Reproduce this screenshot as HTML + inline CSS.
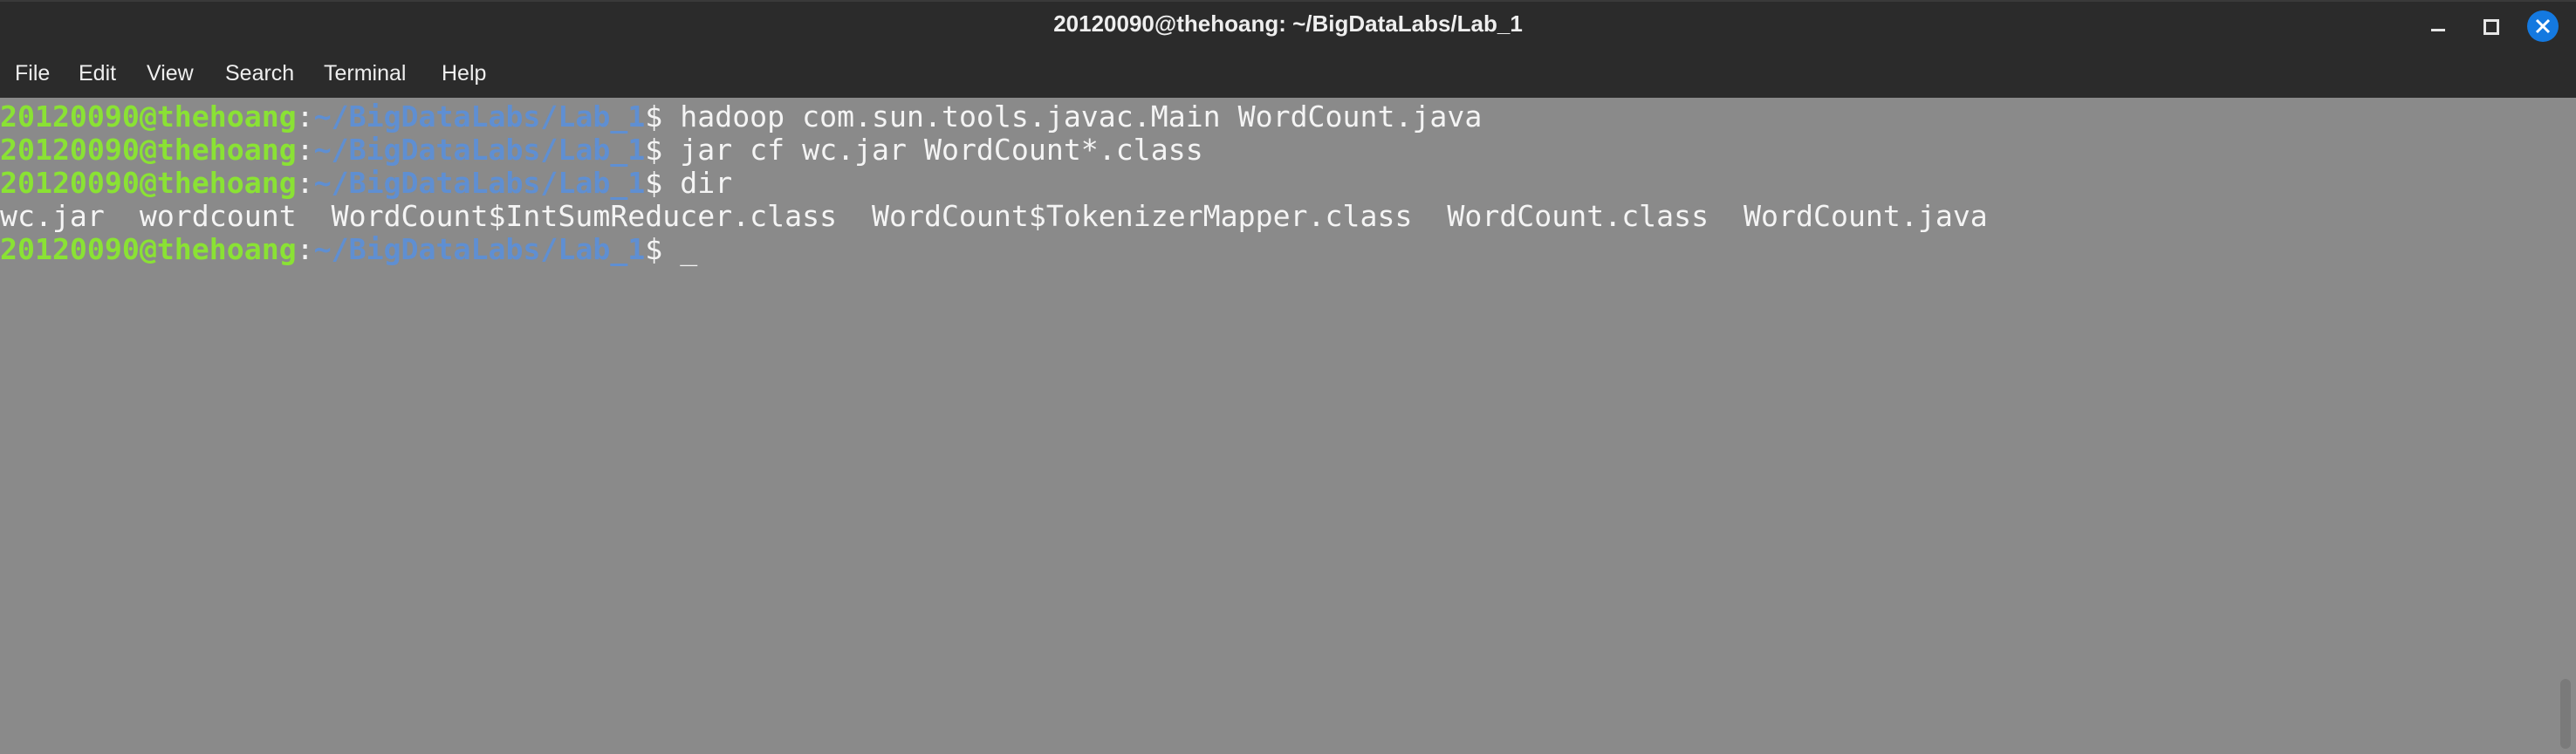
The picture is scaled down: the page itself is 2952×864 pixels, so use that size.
<!DOCTYPE html>
<html><head><style>
body{margin:0;width:2952px;height:864px;background:#8a8a8a;overflow:hidden;position:relative;font-family:"Liberation Sans",sans-serif}
#hd{position:absolute;left:0;top:0;width:2952px;height:112px;background:#2b2b2b;border-top:2px solid #3a3a3a;box-sizing:border-box}
#title{position:absolute;top:10px;width:100%;text-align:center;color:#eee;font-size:26px;font-weight:bold}
.m{position:absolute;top:68px;color:#eee;font-size:25px}
#term{position:absolute;left:0;top:115px;font-family:"DejaVu Sans Mono",monospace;font-size:33.2px;line-height:38px;color:#f4f4f4;white-space:pre}
.g{color:#8ae234;font-weight:bold}.b{color:#5f8fd2;font-weight:bold}
</style></head><body>
<div id="hd">
<div id="title">20120090@thehoang: ~/BigDataLabs/Lab_1</div>
<span class="m" style="left:17px">File</span>
<span class="m" style="left:90px">Edit</span>
<span class="m" style="left:168px">View</span>
<span class="m" style="left:258px">Search</span>
<span class="m" style="left:371px">Terminal</span>
<span class="m" style="left:506px">Help</span>
<div style="position:absolute;left:2786px;top:31px;width:16px;height:3px;background:#e6e6e6"></div>
<div style="position:absolute;left:2846px;top:20px;width:12px;height:12px;border:3px solid #e6e6e6"></div>
<div style="position:absolute;left:2896px;top:10px;width:36px;height:36px;border-radius:50%;background:#1479e0"></div>
<svg style="position:absolute;left:2896px;top:10px" width="36" height="36"><path d="M11 11L25 25M25 11L11 25" stroke="#fff" stroke-width="3"/></svg>
</div>
<div id="term"><span class="g">20120090@thehoang</span>:<span class="b">~/BigDataLabs/Lab_1</span>$ hadoop com.sun.tools.javac.Main WordCount.java
<span class="g">20120090@thehoang</span>:<span class="b">~/BigDataLabs/Lab_1</span>$ jar cf wc.jar WordCount*.class
<span class="g">20120090@thehoang</span>:<span class="b">~/BigDataLabs/Lab_1</span>$ dir
wc.jar  wordcount  WordCount$IntSumReducer.class  WordCount$TokenizerMapper.class  WordCount.class  WordCount.java
<span class="g">20120090@thehoang</span>:<span class="b">~/BigDataLabs/Lab_1</span>$ _</div>
<div style="position:absolute;left:2934px;top:778px;width:12px;height:80px;border-radius:6px;background:#7a7a7a"></div>
</body></html>
